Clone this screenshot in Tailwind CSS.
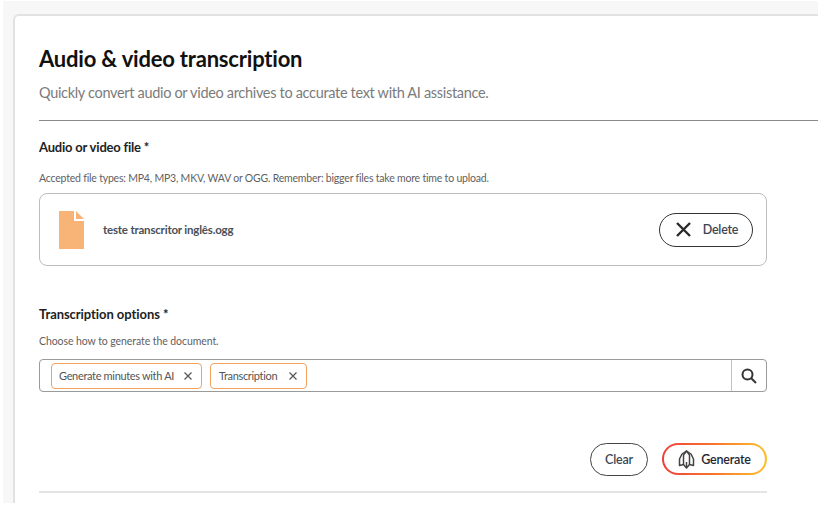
<!DOCTYPE html>
<html lang="en">
<head>
  <meta charset="UTF-8" />
  <title>Audio &amp; video transcription</title>
  <script src="https://cdn.jsdelivr.net/npm/@tailwindcss/browser@4"></script>
</head>
<body class="bg-white w-[824px] h-[520px] overflow-hidden font-['Lato',sans-serif] tracking-[-0.2px]">
  <div class="ml-[3px] mt-px h-[502px] w-[815px] bg-[#f7f7f7] pl-[10px] pt-[13px] overflow-hidden">
    <main class="h-[520px] w-[830px] bg-white border-2 border-b-0 border-r-0 border-[#e2e2e2] rounded-tl-md pl-[24px] pt-[27px]">
      <!-- header -->
      <h1 class="w-[790px] text-[22px] leading-[32px] font-bold text-[#111111]">Audio &amp; video transcription</h1>
      <p class="mt-[8px] text-[14.5px] leading-[20px] tracking-[-0.32px] text-[#7b7b7b]">Quickly convert audio or video archives to accurate text with AI assistance.</p>
      <hr class="mt-[17px] w-[790px] border-t border-[#8a8a8a]" />

      <!-- file -->
      <h2 class="mt-[17px] text-[13px] leading-[18px] font-bold text-[#222222]">Audio or video file *</h2>
      <p class="mt-[15px] text-[10.5px] leading-[14px] text-[#5f5f5f]">Accepted file types: MP4, MP3, MKV, WAV or OGG. Remember: bigger files take more time to upload.</p>
      <div class="mt-[8px] w-[728px] h-[73px] border border-[#bdbdbd] rounded-lg flex items-center pl-[19px] pr-[13px]">
        <svg class="w-[25px] h-[38px]" viewBox="0 0 25 38"><path d="M0 0H15V10H25V38H0Z" fill="#f8b476"/><path d="M17 0L25 8H17Z" fill="#f8b476"/></svg>
        <span class="ml-[19px] pt-px text-[11.5px] font-bold text-[#4a4f57]">teste transcritor inglês.ogg</span>
        <button class="ml-auto w-[94px] h-[34px] border border-[#333333] rounded-full flex items-center justify-center gap-[11px] pl-px text-[12.5px] font-semibold text-[#3d4654]">
          <svg class="w-[17px] h-[17px]" viewBox="0 0 17 17" fill="none" stroke="#2b2b2b" stroke-width="2.4"><path d="M2 2L15 15M15 2L2 15"/></svg>
          <span class="pt-[2px]">Delete</span>
        </button>
      </div>

      <!-- options -->
      <h2 class="mt-[39px] text-[13px] leading-[18px] tracking-[-0.06px] font-bold text-[#222222]">Transcription options *</h2>
      <p class="mt-[11px] text-[10.5px] leading-[14px] tracking-[-0.08px] text-[#5f5f5f]">Choose how to generate the document.</p>
      <div class="mt-[11px] w-[728px] h-[33px] border border-[#9a9a9a] rounded flex items-center pl-[11px]">
        <span class="h-[26px] w-[151px] border border-[#f0a25e] rounded flex items-center pl-[7px] pr-[9px] justify-between text-[11px] tracking-[-0.33px] text-[#555555]"><span class="pt-px">Generate minutes with AI</span>
          <svg class="w-[8px] h-[8px]" viewBox="0 0 8 8" fill="none" stroke="#555555" stroke-width="1.2"><path d="M.5.5L7.5 7.5M7.5.5L.5 7.5"/></svg>
        </span>
        <span class="ml-[8px] h-[26px] w-[97px] border border-[#f0a25e] rounded flex items-center pl-[8px] pr-[9px] justify-between text-[11px] tracking-[-0.33px] text-[#555555]"><span class="pt-px">Transcription</span>
          <svg class="w-[8px] h-[8px]" viewBox="0 0 8 8" fill="none" stroke="#555555" stroke-width="1.2"><path d="M.5.5L7.5 7.5M7.5.5L.5 7.5"/></svg>
        </span>
        <div class="ml-auto w-[35px] h-full border-l border-[#c4c4c4] flex items-center justify-center">
          <svg class="w-[16px] h-[16px]" viewBox="0 0 16 16" fill="none" stroke="#333333" stroke-width="2"><circle cx="6.5" cy="6.5" r="5"/><path d="M10 10L15 15"/></svg>
        </div>
      </div>

      <!-- actions -->
      <div class="mt-[51px] w-[728px] flex justify-end gap-[14px]">
        <button class="w-[58px] h-[33px] border border-[#444444] rounded-full text-[12.5px] font-semibold text-[#3d4654]"><span class="block pt-[2px]">Clear</span></button>
        <div class="w-[105px] h-[32px] rounded-full p-[2px] bg-gradient-to-r from-[#ef3b3b] via-[#f8742c] to-[#fbc02d]">
          <button class="w-full h-full rounded-full bg-white flex items-center justify-center gap-[6px] text-[12.5px] font-semibold text-[#1f2733]">
            <svg class="w-[17px] h-[19px]" viewBox="0 0 17 19" fill="none" stroke="#444444" stroke-width="1.5" stroke-linejoin="round"><path d="M8.5 1L13 4L15.5 9V15.5L11.5 14.5L8.5 18L5.5 14.5L1.5 15.5V9L4 4Z"/><path d="M5.5 14.5V5L8.5 1L11.5 5V14.5"/><path d="M8.5 12V18"/></svg>
            <span class="pt-[2px]">Generate</span>
          </button>
        </div>
      </div>
      <hr class="mt-[15px] w-[728px] border-t-2 border-[#e4e4e4]" />
    </main>
  </div>
</body>
</html>
